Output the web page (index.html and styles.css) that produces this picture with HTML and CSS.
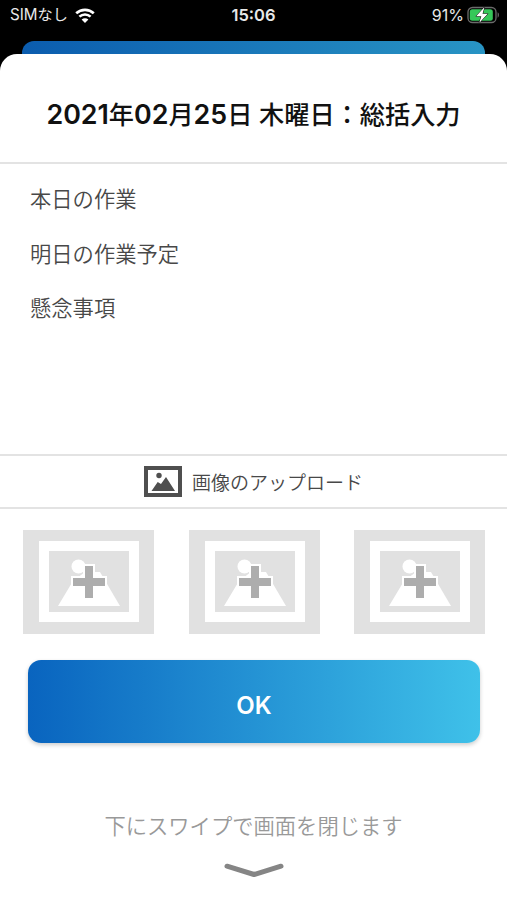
FILE: index.html
```html
<!DOCTYPE html>
<html lang="ja">

<head>
    <meta charset="utf-8">
    <meta name="viewport" content="width=device-width, initial-scale=1.0">
    <title>総括入力</title>
    <link rel="stylesheet" href="styles.css">
</head>

<body>
    <header class="statusbar">
        <div class="carrier">
            <span>SIMなし</span>
            <svg class="wifi" width="20" height="15" viewBox="0 0 20 15">
                <path d="M1.2 5.3C6.2 .7 13.8 .7 18.8 5.3M4.4 8.6C7.6 5.7 12.4 5.7 15.6 8.6" fill="none" stroke="#fff" stroke-width="2.6" />
                <path d="M10 15L6.6 11.6C8.6 9.9 11.4 9.9 13.4 11.6Z" fill="#fff" />
            </svg>
        </div>
        <span class="clock">15:06</span>
        <div class="power">
            <span>91%</span>
            <svg class="battery" width="33" height="18" viewBox="0 0 33 18">
                <rect x="1" y="1.5" width="28" height="15" rx="4.5" fill="none" stroke="#6b6b6b" stroke-width="1.3" />
                <rect x="2.8" y="3.3" width="23" height="11.4" rx="2.5" fill="#35c759" />
                <path d="M30.6 6.3C32.4 7.2 32.4 10.8 30.6 11.7Z" fill="#6b6b6b" />
                <path d="M17.6 1L9 10.2H14.3L12.2 17L20.8 7.8H15.5Z" fill="#fff" stroke="#000" stroke-width="1" paint-order="stroke" />
            </svg>
        </div>
    </header>

    <div class="back-page"></div>

    <main class="sheet">
        <h1><b>2021</b>年<b>02</b>月<b>25</b>日 木曜日：総括入力</h1>

        <section class="memo">
            <p>本日の作業</p>
            <p>明日の作業予定</p>
            <p>懸念事項</p>
        </section>

        <div class="upload">
            <svg width="38" height="31" viewBox="0 0 38 31" fill="#4f4f4f">
                <path fill-rule="evenodd" d="M0 0H38V31H0ZM4 4V27H34V4Z" />
                <circle cx="15" cy="9.5" r="2.7" />
                <path d="M7.5 25L13.7 16L17 18L22 11L31 25Z" />
            </svg>
            <span>画像のアップロード</span>
        </div>

        <section class="images">
            <svg class="thumb" viewBox="0 0 131 104">
                <use href="#empty-image" />
            </svg>
            <svg class="thumb" viewBox="0 0 131 104">
                <use href="#empty-image" />
            </svg>
            <svg class="thumb" viewBox="0 0 131 104">
                <use href="#empty-image" />
            </svg>
        </section>

        <button class="ok">OK</button>

        <footer>
            <p>下にスワイプで画面を閉じます</p>
            <svg width="60" height="15" viewBox="0 0 60 15">
                <path d="M3 3.2L30 11.5L57 3.2" fill="none" stroke="#858585" stroke-width="5" stroke-linecap="round" stroke-linejoin="round" />
            </svg>
        </footer>
    </main>

    <svg class="symbols">
        <symbol id="empty-image" viewBox="0 0 131 104">
            <path d="M0 0H131V104H0Z" fill="#e1e1e1" />
            <path d="M16 11H116V92H16Z" fill="#fff" />
            <path d="M26 21H106V82H26Z" fill="#e1e1e1" />
            <circle cx="55.5" cy="36.5" r="7" fill="#fff" />
            <path d="M35 76L50 51L62 42H77L97 76Z" fill="#fff" />
            <path d="M62 36H70V48H82V56H70V68H62V56H50V48H62Z" fill="#adadad" stroke="#fff" stroke-width="4" paint-order="stroke" />
        </symbol>
    </svg>
</body>

</html>
```

FILE: styles.css
```css
* {
    box-sizing: border-box;
}

body {
    margin: 0;
    height: 900px;
    overflow: hidden;
    background-color: #000;
    font-family: Inter, 'Noto Sans CJK JP', sans-serif;
}

h1,
p {
    margin: 0;
}

svg {
    display: block;
}

.statusbar {
    height: 41px;
    padding: 0 7px 11px 10px;
    display: grid;
    grid-template-columns: 1fr auto 1fr;
    align-items: center;
    color: #e8e8e8;
    font-size: 16px;
    line-height: 30px;
}

.carrier,
.power {
    display: flex;
    align-items: center;
}

.carrier {
    gap: 7px;
    font-size: 15.2px;
}

.power {
    justify-content: flex-end;
    gap: 3px;
}

.clock {
    margin-right: 3px;
    font-weight: 600;
    font-size: 16.5px;
}

.back-page {
    height: 31px;
    margin: 0 22px;
    border-radius: 12px 12px 0 0;
    background: linear-gradient(to right, #0b5cae, #2894c4);
}

.sheet {
    position: relative;
    height: 846px;
    margin-top: -18px;
    border-radius: 17px 17px 0 0;
    background-color: #fff;
    color: #484848;
}

h1 {
    height: 110px;
    padding-top: 12px;
    border-bottom: 2px solid #e3e3e3;
    text-align: center;
    white-space: nowrap;
    font-size: 25.2px;
    font-weight: 500;
    line-height: 97px;
    color: #111;
}

h1 b {
    font-size: 26.8px;
    font-weight: 600;
}

.memo {
    height: 292px;
    padding: 8px 29px 0 30px;
    border-bottom: 2px solid #e3e3e3;
    font-size: 21.3px;
    font-weight: 350;
    line-height: 54.5px;
}

.upload {
    height: 53px;
    border-bottom: 2px solid #e3e3e3;
    display: flex;
    align-items: center;
    justify-content: center;
    gap: 10px;
    font-size: 19px;
    font-weight: 350;
}

.images {
    padding: 21px 22px 0 23px;
    display: flex;
    justify-content: space-between;
}

.thumb {
    width: 131px;
    height: 104px;
}

.ok {
    display: block;
    width: 452px;
    height: 83px;
    margin: 26px 0 0 28px;
    padding: 7px 0 0;
    border: none;
    border-radius: 13px;
    background: linear-gradient(to right, #0964bf, #3fc1e9);
    box-shadow: 0 2px 4px rgba(0, 0, 0, .2);
    color: #fff;
    font-family: inherit;
    font-size: 24px;
    font-weight: 600;
}

footer {
    padding-top: 62px;
    display: flex;
    flex-direction: column;
    align-items: center;
    gap: 16px;
    font-size: 21.3px;
    font-weight: 350;
    line-height: 42px;
    color: #999;
}

.symbols {
    position: absolute;
    width: 0;
    height: 0;
}
```
